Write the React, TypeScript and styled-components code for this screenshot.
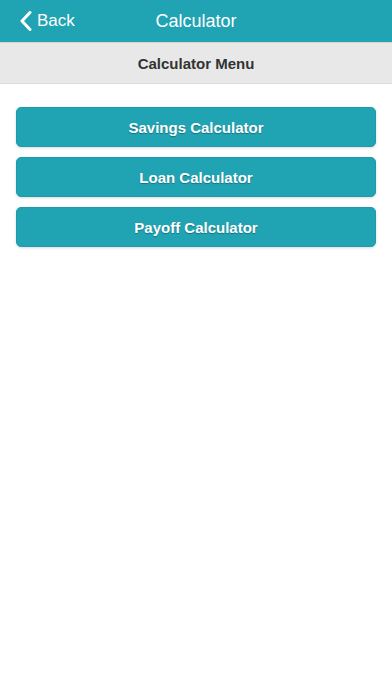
import React from "react";
import styled, { createGlobalStyle } from "styled-components";

const Global = createGlobalStyle`
  html, body { margin: 0; padding: 0; background: #fff; }
  body { font-family: "Liberation Sans", Arial, Helvetica, sans-serif; }
  * { box-sizing: border-box; }
`;

const Page = styled.div`
  width: 392px;
  min-height: 696px;
  background: #fff;
  display: flex;
  flex-direction: column;
`;

const Header = styled.header`
  height: 42px;
  background: #20a3b3;
  display: grid;
  grid-template-columns: 1fr auto 1fr;
  align-items: center;
  color: #fff;
`;

const BackButton = styled.div`
  display: flex;
  align-items: center;
  gap: 5px;
  padding-left: 20px;
  font-size: 17px;
  color: #fff;
`;

const Title = styled.h1`
  margin: 0;
  font-size: 18px;
  font-weight: normal;
  color: #fff;
`;

const SubBar = styled.div`
  height: 42px;
  background: #e8e8e8;
  border-top: 1px solid #d4d4d4;
  border-bottom: 1px solid #dcdcdc;
  display: flex;
  align-items: center;
  justify-content: center;
  font-size: 15px;
  font-weight: bold;
  color: #333;
`;

const Menu = styled.div`
  display: flex;
  flex-direction: column;
  gap: 10px;
  padding: 23px 16px 0;
`;

const MenuButton = styled.button`
  height: 40px;
  width: 100%;
  border: 1px solid #1e9ba9;
  border-radius: 5px;
  background: #20a3b3;
  color: #fff;
  font-family: "Liberation Sans", Arial, Helvetica, sans-serif;
  font-size: 15px;
  font-weight: bold;
  text-shadow: 0 1px 1px rgba(0, 0, 0, 0.3);
  box-shadow: 0 1px 3px rgba(0, 0, 0, 0.15);
  cursor: pointer;
`;

const Chevron = () => (
  <svg width="12" height="20" viewBox="0 0 12 20">
    <path d="M10 1.5 L2 10 L10 18.5" fill="none" stroke="#fff" strokeWidth="3" strokeLinecap="round" strokeLinejoin="round" />
  </svg>
);

export default function App() {
  return (
    <Page>
      <Global />
      <Header>
        <BackButton>
          <Chevron />
          <span>Back</span>
        </BackButton>
        <Title>Calculator</Title>
        <span />
      </Header>
      <SubBar>Calculator Menu</SubBar>
      <Menu>
        <MenuButton>Savings Calculator</MenuButton>
        <MenuButton>Loan Calculator</MenuButton>
        <MenuButton>Payoff Calculator</MenuButton>
      </Menu>
    </Page>
  );
}
